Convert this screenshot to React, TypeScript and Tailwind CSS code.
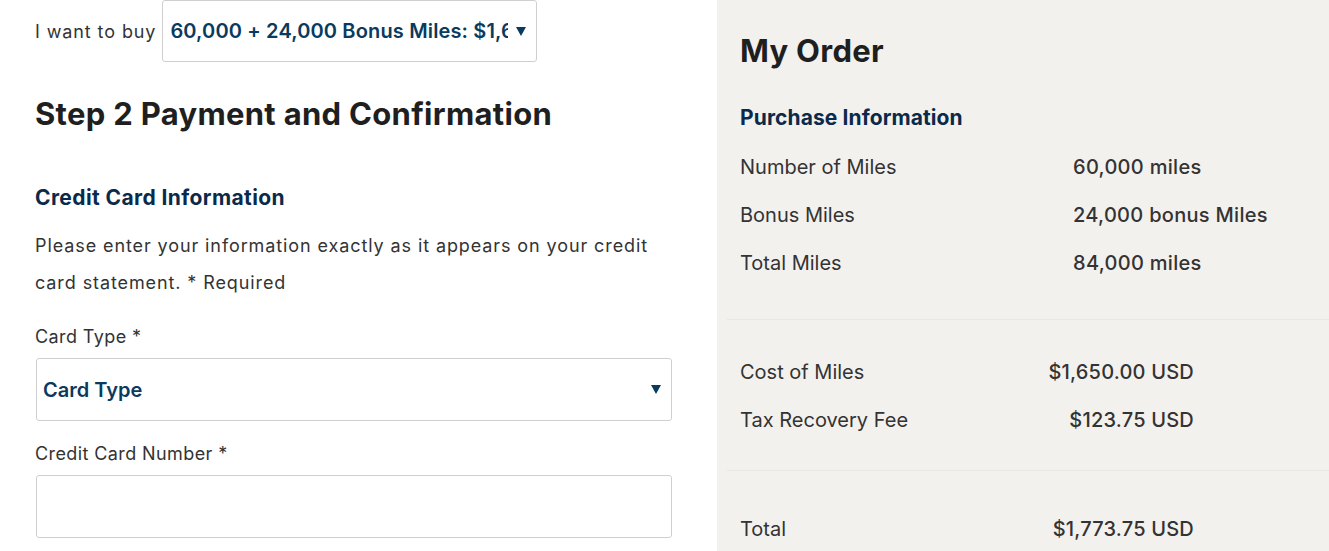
import React from "react";

const font = { fontFamily: "Inter, 'Noto Sans', sans-serif" };

function Arrow() {
  return (
    <svg width="10" height="9" viewBox="0 0 10 9" className="shrink-0">
      <path d="M0 0 L10 0 L5 9 Z" fill="#0a3a5e" />
    </svg>
  );
}

function Row({ label, value, right }: { label: string; value: string; right?: boolean }) {
  return (
    <div className="flex h-[48px] items-center text-[20px] text-[#333]">
      <div className="w-[300px] shrink-0">{label}</div>
      {right ? (
        <div className="flex w-[154px] justify-end whitespace-nowrap font-medium tracking-[0.2px]">{value}</div>
      ) : (
        <div className="pl-[33px] whitespace-nowrap font-medium tracking-[0.3px]">{value}</div>
      )}
    </div>
  );
}

export default function App() {
  return (
    <div className="flex h-[551px] w-[1329px] overflow-hidden bg-white" style={font}>
      <div className="w-[717px] shrink-0 pl-[35px]">
        <div className="flex h-[62px] items-center gap-[6px]">
          <span className="text-[18px] tracking-[0.9px] text-[#333]">I want to buy</span>
          <div className="flex h-[62px] w-[375px] items-center rounded-[3px] border border-[#cfcfcf] pl-[7px] pr-[10px]">
            <div className="flex-1 overflow-hidden whitespace-nowrap text-[20px] font-semibold tracking-[0.15px] text-[#0a3a5e]">
              60,000 + 24,000 Bonus Miles: $1,650.00
            </div>
            <div className="ml-[8px]"><Arrow /></div>
          </div>
        </div>
        <h1 className="mt-[33px] text-[31px] font-bold leading-[38px] tracking-[0.3px] text-[#1f1f1f]">
          Step 2 Payment and Confirmation
        </h1>
        <h2 className="mt-[51px] text-[21px] font-bold leading-[28px] tracking-[0.4px] text-[#0b2a4a]">
          Credit Card Information
        </h2>
        <p className="mt-[15px] w-[640px] text-[18px] leading-[37px] tracking-[0.9px] text-[#333]">
          Please enter your information exactly as it appears on your credit card statement. * Required
        </p>
        <div className="mt-[24px] text-[18px] leading-[24px] tracking-[0.4px] text-[#333]">Card Type *</div>
        <div className="ml-[1px] mt-[9px] flex h-[63px] w-[636px] items-center justify-between rounded-[3px] border border-[#cfcfcf] pl-[6px] pr-[10px]">
          <span className="text-[20px] font-semibold text-[#0a3a5e]">Card Type</span>
          <Arrow />
        </div>
        <div className="mt-[21px] text-[18px] leading-[24px] tracking-[0.4px] text-[#333]">Credit Card Number *</div>
        <div className="ml-[1px] mt-[9px] h-[63px] w-[636px] rounded-[3px] border border-[#cfcfcf]" />
      </div>
      <div className="flex-1 bg-[#f3f1ee]">
        <div className="pl-[23px]">
          <h1 className="mt-[32px] text-[31px] font-bold leading-[38px] tracking-[0.3px] text-[#1f1f1f]">My Order</h1>
          <h2 className="mt-[34px] text-[21px] font-bold leading-[28px] tracking-[0.1px] text-[#0b2a4a]">
            Purchase Information
          </h2>
          <div className="mt-[11px]">
            <Row label="Number of Miles" value="60,000 miles" />
            <Row label="Bonus Miles" value="24,000 bonus Miles" />
            <Row label="Total Miles" value="84,000 miles" />
          </div>
        </div>
        <div className="ml-[10px] mt-[32px] h-px bg-[#e9e7e5]" />
        <div className="mt-[28px] pl-[23px]">
          <Row label="Cost of Miles" value="$1,650.00 USD" right />
          <Row label="Tax Recovery Fee" value="$123.75 USD" right />
        </div>
        <div className="ml-[10px] mt-[26px] h-px bg-[#e9e7e5]" />
        <div className="mt-[34px] pl-[23px]">
          <Row label="Total" value="$1,773.75 USD" right />
        </div>
      </div>
    </div>
  );
}
